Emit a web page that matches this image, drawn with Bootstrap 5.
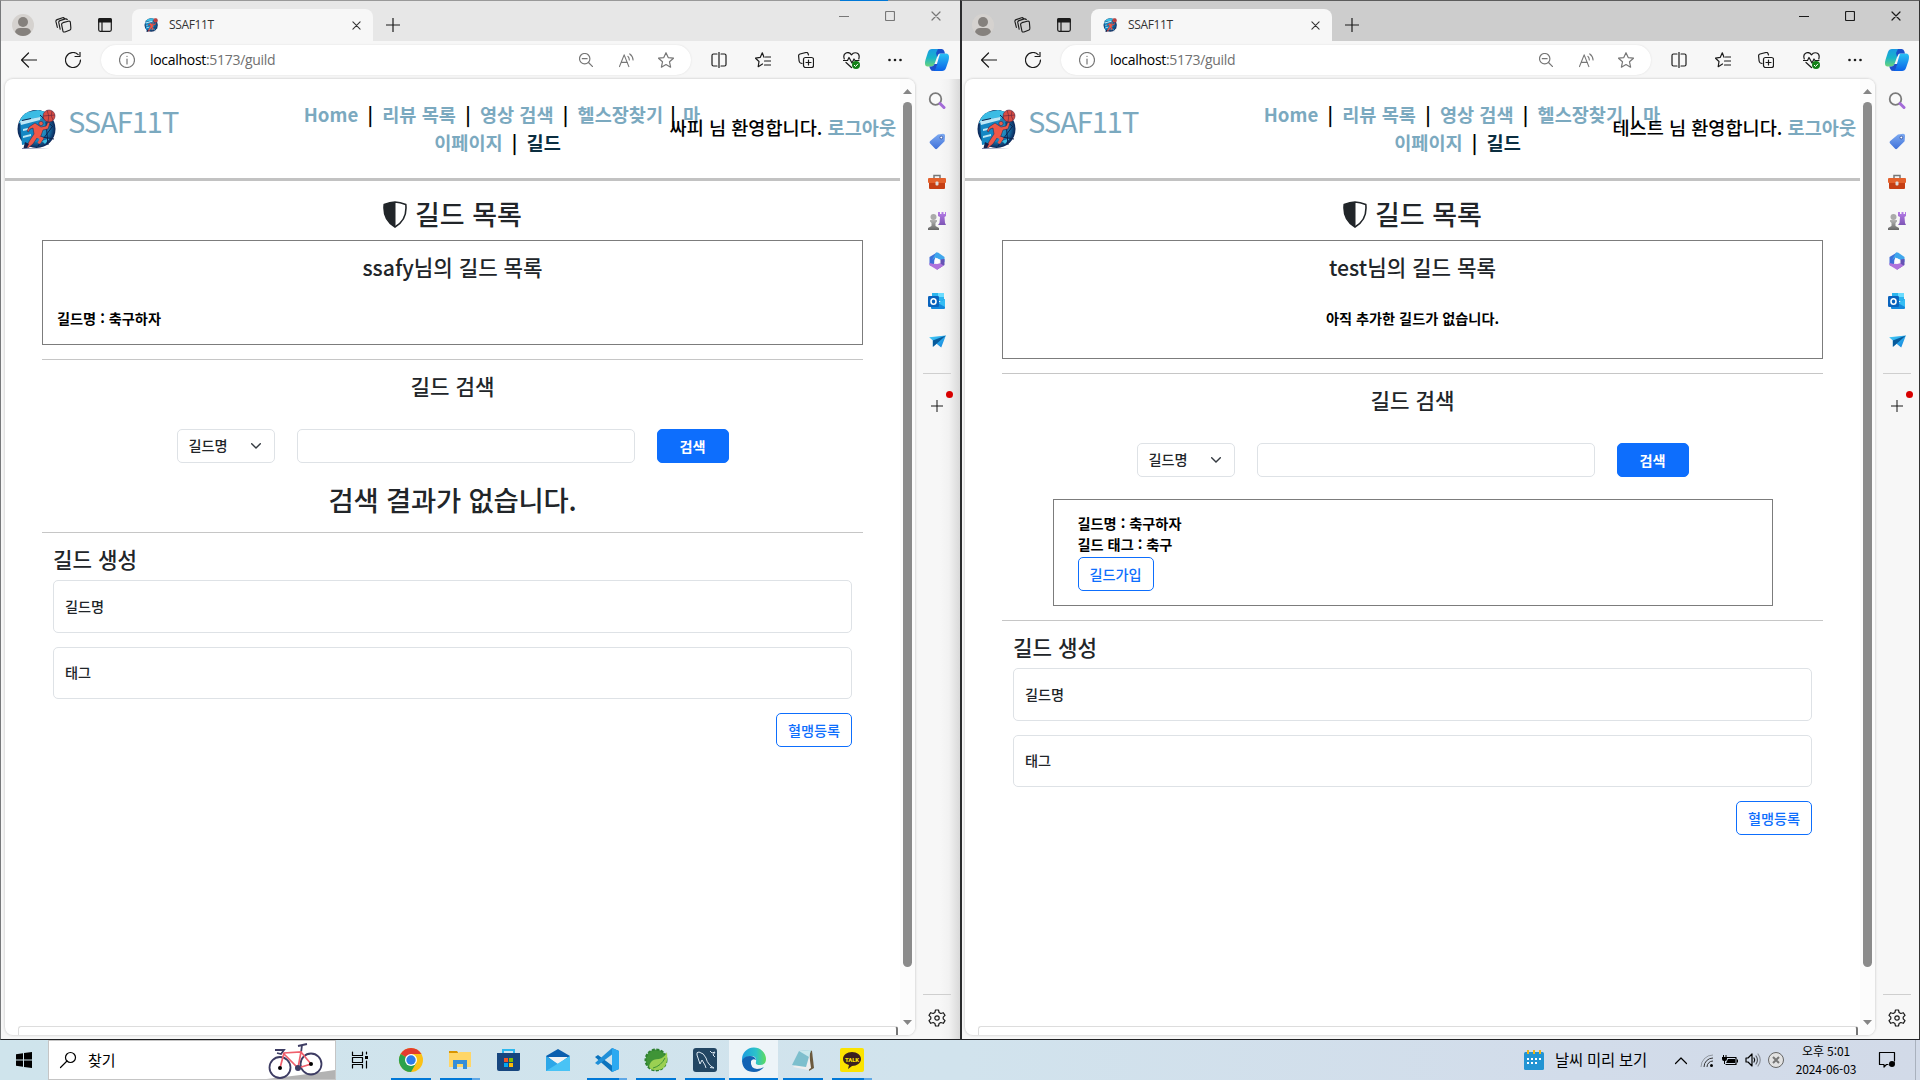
<!DOCTYPE html>
<html lang="ko">
<head>
<meta charset="utf-8">
<title>SSAF11T</title>
<link href="https://cdn.jsdelivr.net/npm/bootstrap@5.3.0/dist/css/bootstrap.min.css" rel="stylesheet">
<style>
body{width:1920px;height:1080px;overflow:hidden;font-family:"Noto Sans CJK KR","Noto Sans",sans-serif;background:#202124}
svg{display:block;flex:none;overflow:visible}
.ln{fill:none;stroke:currentColor;stroke-width:1.2;stroke-linecap:round;stroke-linejoin:round}
.desk{height:1040px}
.win{width:960px;height:1040px;border:1px solid #999;border-left-color:#77797b;border-bottom-color:#202124;border-right:0;background:#f7f7f7;color:#1b1b1b}
.win-b{border-top-color:#5c5c5c;border-left:2px solid #2a2b2d;border-right:1px solid #333}
.strip{height:40px;background:#e7e7e7}
.win-b .strip{background:#cdcdcd}
.strip>.c44{margin-right:1px}
.win-b .strip>.c44{width:42px}
.cell{display:flex;align-items:center;justify-content:center;flex:none}
.strip .cell{height:32px;margin-top:8px}
.c34{width:34px}.c50{width:50px}.c48{width:48px}.c44{width:44px}.c46{width:46px}.c40{width:40px}
.strip .wctl{width:46px;height:30px;margin:0}
.win-a .strip{padding-right:1px}
.win-a .wctl{color:#777}
.tabx{width:241px;height:32px;margin:8px 0 0 2px;background:#f7f7f7;border-radius:8px 8px 0 0;padding:0 12px 0 12px;font:12px/32px "Open Sans","Noto Sans",sans-serif;color:#333}
.tabx .ttl{margin-left:11px;letter-spacing:-.35px}
.tools{height:38px;padding-left:6px}
.win-b .tools{padding-left:5px}
.pill{width:590px;height:30px;margin-left:6px;border-radius:15px;background:#fff;box-shadow:0 0 2px #ddd;padding-left:18px;padding-right:5px;color:#777}
.url{font:14px/30px "Open Sans","Noto Sans",sans-serif;color:#707070;margin-left:15px;letter-spacing:-.3px}
.url b{font-weight:400;color:#000}
.mainrow{height:960px;padding-left:4px}
.win-b .mainrow{padding-left:3px}
.view{width:910px;height:956px;background:#fff;border-radius:8px;box-shadow:0 0 2px 1px #dcdcdc;overflow:hidden}
.doc{width:895px;height:956px}
.scrollcol{width:15px;background:#fcfcfc;padding:10px 0}
.thumb{width:9px;height:865px;margin-top:8px;border-radius:5px;background:#8b8b8b}
.side{width:45px;background:linear-gradient(90deg,#f7f7f7 55%,#f2f2f2 75%,#d9d9d9);padding-top:2px}
.win-b .side{background:#f7f7f7;width:44px}
.side .cell{width:44px;height:40px}
.rule28{width:28px;height:1px;background:#cfcfcf;margin-left:8px}
.dot{position:absolute;right:6px;top:13px;width:7px;height:7px;border-radius:50%;background:#d80000}
.side .sdiv{margin-top:12px}
.side .addc{margin-top:4px;padding-top:15px}
.side .gearc{padding-top:5px;margin-bottom:4px}
.site{height:102px;border-bottom:3px solid #c2c2c2;position:relative;padding-left:8px}
.brand{font-size:29px;line-height:40px;color:#7ba9bf;margin:21px 0 0 9px;letter-spacing:-1px}
.menu{position:absolute;left:297px;top:21px;width:400px;font-size:18.6px;line-height:28px;font-weight:700;color:#7ba9bf;text-align:center;white-space:pre}
.menu .second{padding-right:9px}
.menu i{font-style:normal;color:#000;display:inline-block;width:24px;text-align:center}
.menu i.n{width:20px}
.menu .on{color:#0b2e40}
.hello{position:absolute;right:4px;top:34px;font-size:18.6px;line-height:28px;font-weight:500;color:#000;white-space:nowrap}
.hello b{color:#7ba9bf}
.guild{padding:0 37px;color:#212529}
.guild h2{font-size:27px;font-weight:500;line-height:50px;margin:0 0 1px}
.guild h2.nores{font-size:27.4px;height:69px;padding-top:11px;margin:0;letter-spacing:-.2px}
.guild h4{font-size:21.2px;font-weight:500;line-height:52px;padding-bottom:1px;margin:0}
.frame h4{line-height:50px;padding:0}
.guild .frame h4{padding-top:1px;height:51px}
.frame{border:1px solid #7c7c7c}
.small14{font-size:14.2px;font-weight:700;line-height:21px;color:#000}
.owned{padding:16px 14px 0}
.line1{height:1px;background:#c6c6c6;margin:14px 0 0}
.line1.snug{margin:0}
.find{height:34px;margin-top:16px}
.sel{width:98px;border:1px solid #dee2e6;border-radius:5px;padding:0 13px 0 11px;font-size:14.2px;font-weight:500}
.inp{width:338px;border:1px solid #dee2e6;border-radius:5px;margin:0 22px}
.guild .btn{font-size:14.2px;font-weight:500;line-height:20px;height:34px;padding:0;border-radius:5px;--bs-btn-border-radius:5px}
.w72{width:72px}.w76{width:76px}
.guild .w72{font-weight:700}
.fld{height:52.5px;border:1px solid #dee2e6;border-radius:5px;margin-bottom:14px;padding-left:11px;font-size:14.2px;font-weight:500}
.make{padding:0 11px}
.guild .make h4{line-height:47px;padding:2px 0 0;height:47px}
.result{width:720px;height:107px;margin:22px auto 0;padding:13px 24px}
.result .btn{margin-top:2px}
.foot{position:absolute;left:13px;width:880px;top:947px;height:12px;border:1px solid #ddd;border-right:2px solid #777;border-radius:3px 3px 0 0}
.taskbar{height:40px;background:linear-gradient(90deg,#cfe4ec,#d1e3ed 50%,#d2dcea 82%,#d2dae8);color:#000}
.srch{width:288px;height:40px;background:#fff;border:1px solid #c5c5c5;padding-left:11px;font-size:15px;overflow:hidden}
.app{width:49px;height:40px;position:relative}
.app.run::after{content:"";position:absolute;left:4.5px;bottom:0;width:40px;height:2px;background:#0078d7}
.app.multi::after{background:linear-gradient(90deg,#0078d7 80%,#5fa8e6 80%)}
.app.act{background:#edf4f8}
.app.act::after{left:0;width:49px}
.startc{width:48px}.viewc{width:50px;padding-right:2px}
.tray{width:23px}
.weather{font-size:15.4px;margin:0 15px 0 11px;letter-spacing:-.2px;white-space:nowrap}
.chevc{width:33px;padding-left:5px}
.clock{font-size:12px;line-height:18px;width:79px;padding:0 1px 1px 0;text-align:center;letter-spacing:-.1px}
.bell{width:50px;height:40px;padding-right:6px;border-right:1px solid #a9b1bd;margin-right:4px}
.flash{position:absolute;left:840px;top:0;width:48px;height:1px;background:#0078d7}
</style>
<script src="https://cdn.jsdelivr.net/npm/bootstrap@5.3.0/dist/js/bootstrap.bundle.min.js"></script>
</head>
<body>
<svg width="0" height="0" class="position-absolute">
<defs>
<linearGradient id="gPur" x1="0" y1="0" x2="0" y2="1"><stop stop-color="#b77be8"/><stop offset="1" stop-color="#7d56b5"/></linearGradient>
<linearGradient id="gGray" x1="0" y1="0" x2="0" y2="1"><stop stop-color="#b5b5b5"/><stop offset="1" stop-color="#666"/></linearGradient>
<linearGradient id="gTag" x1="0" y1="0" x2="0" y2="1"><stop stop-color="#7eabf2"/><stop offset="1" stop-color="#3f70d8"/></linearGradient>
<linearGradient id="gCop1" x1="0" y1="0" x2="0" y2="1"><stop stop-color="#1a9be4"/><stop offset=".5" stop-color="#18b4c9"/><stop offset="1" stop-color="#6bd47a"/></linearGradient>
<linearGradient id="gCop2" x1="0" y1="0" x2="0" y2="1"><stop stop-color="#29c3f5"/><stop offset="1" stop-color="#0b62e8"/></linearGradient>
<linearGradient id="gEdge" x1="0" y1="0" x2="1" y2="0"><stop stop-color="#1b9de2"/><stop offset=".6" stop-color="#2cc3c9"/><stop offset="1" stop-color="#5fdc5a"/></linearGradient>
<linearGradient id="gBlue" x1="0" y1="0" x2="1" y2="1"><stop stop-color="#45cdf7"/><stop offset="1" stop-color="#1282dc"/></linearGradient>
<radialGradient id="gLogo"><stop stop-color="#38b5e0"/><stop offset=".65" stop-color="#1678b0"/><stop offset="1" stop-color="#0c2455"/></radialGradient>
<symbol id="logo" viewBox="0 0 40 40"><circle cx="20.500" cy="20" r="19" fill="url(#gLogo)"/><path d="M3 14Q5 6 12 3L22 1 30 3 25 10 6 15zM26 32l8-3-5 6z" fill="#3bbce4"/><path d="M4 12l20-4-1 24-17 4z" fill="#1487c3"/><path d="M4 12l20-4v3L5 16zM7 20l5-1v2l-5 1zm0 7l8-2v2l-8 2z" fill="#bde7f5"/><path d="M6 11l9-2v1l-9 2z" fill="#102550"/><path d="M24 6l13 12M22 37l14-19M20 27l18 3M30 13l2 23" stroke="#0e2350" fill="none"/><circle cx="25" cy="14.500" r="2.200" fill="#e85b4b" stroke="#132551" stroke-width=".5"/><path d="M13 18l6-4 6 4 5-1 2-4 2 1-2 6-5 1-2 6-4 2-4 6-5 4-2-1 4-7 4-6-1-6-3 1-1.500 3-1.500-1z" fill="#ed5848" stroke="#142650" stroke-width=".5"/><path d="M21 26l7 3-4 6-2.500-1 2-4-4-2z" fill="#ed5848"/><path d="M9 33l4 2-2 4-4 2z" fill="#17234d"/><circle cx="33" cy="7" r="6" fill="#d84c42" stroke="#5d2440" stroke-width=".6"/><path d="M27 7l12-1M31 1q3 6 1 12M36 2q-2 5 1 9" fill="none" stroke="#5d2440" stroke-width=".6"/><path d="M6 39.500l28 1" stroke="#7782a5"/></symbol>
<symbol id="user" viewBox="0 0 22 22"><circle cx="11" cy="11" r="11" fill="#d5d2cf"/><circle cx="11" cy="8" r="5" fill="#85817d"/><path d="M3 18q1-4 5-4h6q4 0 5 4-3 4-8 4t-8-4z" fill="#85817d"/></symbol>
<symbol id="stack" viewBox="0 0 18 18"><path class="ln" d="M8.500 6l5.500-1.500q2-.5 2.300 1.300l.5 6q.2 1.700-1.500 2.200l-4.800 1.800q-2 .6-2.200-1.300L7 8q-.1-1.500 1.500-2zM5.500 13L4 6q-.3-1.700 1.200-2.200L11 2q1.300-.3 2 .8M2.500 11L1 5q-.3-1.700 1.200-2.200L8 .8q1.400-.3 2 .7"/></symbol>
<symbol id="tabact" viewBox="0 0 14 14"><rect class="ln" x=".7" y=".7" width="12.600" height="12.600" rx="1.500"/><path d="M0 2q0-2 2-2h10q2 0 2 2v2.500H0z" fill="currentColor"/><path class="ln" d="M4 4v9"/></symbol>
<symbol id="x" viewBox="0 0 10 10"><path class="ln" d="M1 1l8 8M9 1L1 9"/></symbol>
<symbol id="plus" viewBox="0 0 14 14"><path class="ln" d="M7 0v14M0 7h14"/></symbol>
<symbol id="minw" viewBox="0 0 10 10"><path class="ln" d="M0 5.500h10"/></symbol>
<symbol id="maxw" viewBox="0 0 10 10"><rect class="ln" x=".5" y=".5" width="9" height="9" rx="1"/></symbol>
<symbol id="back" viewBox="0 0 16 16"><path class="ln" d="M16 8H.7M7.500 1L.5 8l7 7"/></symbol>
<symbol id="reload" viewBox="0 0 16 16"><path class="ln" d="M15.500 8a7.500 7.500 0 1 1-2.300-5.400M15 0v4.500h-5"/></symbol>
<symbol id="info" viewBox="0 0 16 16"><circle class="ln" cx="8" cy="8" r="7.500"/><path class="ln" d="M8 7v5M8 4.300v.2"/></symbol>
<symbol id="zout" viewBox="0 0 14 14"><circle class="ln" cx="5.700" cy="5.700" r="5.200"/><path class="ln" d="M9.500 9.500L14 14M3.300 5.700h4.800"/></symbol>
<symbol id="read" viewBox="0 0 16 16"><path class="ln" d="M.5 14.500L5.500 2l5 12.500M2.500 10h6.500M9.500 3.500q1.500 1.500 1.500 4M11.500 1q3.500 2.500 3.500 6.500"/></symbol>
<symbol id="star" viewBox="0 0 16 16"><path class="ln" d="M8 .7l2.200 4.900 5.300.6-4 3.600 1.100 5.400L8 12.500l-4.600 2.700 1.100-5.400-4-3.600 5.300-.6z"/></symbol>
<symbol id="split" viewBox="0 0 16 16"><path class="ln" d="M6 2H2.500Q1 2 1 3.500v9Q1 14 2.500 14H6M10 2h3.500Q15 2 15 3.500v9q0 1.500-1.500 1.500H10M8 0v16"/></symbol>
<symbol id="favs" viewBox="0 0 16 16"><path class="ln" d="M9 5.200L7.300.8 5.200 5.400.5 6.200 4 9.500l-.8 5.200L7.500 12M10.500 5H16M9.500 9H16M9.500 13H16"/></symbol>
<symbol id="coll" viewBox="0 0 16 16"><rect class="ln" x="5.500" y="5.500" width="10" height="10" rx="2"/><path class="ln" d="M10.500 8v5M8 10.500h5M4 11.500L2.500 11Q1.300 10.500 1.100 9L.6 4Q.5 2.500 2 2l6-1.500q1.500-.3 2 1l.5 1.500"/></symbol>
<symbol id="heart" viewBox="0 0 17 17"><path class="ln" d="M1.300 7Q-.3 2.500 3 1t5.500 1.800Q10.500 0 13.800 1t2 6M.5 8.500h4l1.500-3 3 5.500 2-4 1 1.500h4M3 10.500l5.500 5"/><circle cx="13" cy="13" r="4" fill="#138018"/><path d="M11 13l1.500 1.500L15 11.800" fill="none" stroke="#fff"/></symbol>
<symbol id="more" viewBox="0 0 14 4"><g fill="currentColor"><circle cx="1.500" cy="2" r="1.300"/><circle cx="7" cy="2" r="1.300"/><circle cx="12.500" cy="2" r="1.300"/></g></symbol>
<symbol id="copilot" viewBox="0 0 24 22"><path d="M9 0h8l-3.500 4L9.500 15Q8.500 17.500 6 17.500H2.500Q0 17.500 0 14.500q0-2 .6-4L3 3Q4 0 7 0z" fill="url(#gCop1)"/><path d="M15 4.500h6q3 0 3 3.500 0 2-.6 4L21 19q-1 3-4 3H8l3-4z" fill="url(#gCop2)"/><path d="M6 17.500q2.500 0 3.500-2.500l3 0L11 19q-1 3-3 3-2 0-3-2.500l-.7-2zM13 0h3.500q2 0 2.700 2l.8 2.500h-5q-1.500 0-2 1.500l-1 2-1-4z" fill="#1b50ca"/></symbol>
<symbol id="ssearch" viewBox="0 0 18 18"><circle cx="7.500" cy="7" r="5.800" fill="#fafafa" stroke="#7b7b7b" stroke-width="1.800"/><path d="M12 11.500l4 4" stroke="#a36bd8" stroke-width="3" stroke-linecap="round"/></symbol>
<symbol id="tag" viewBox="0 0 18 18"><path d="M9.500 1.500L15 .8q2 0 2 2l-.5 6-8 8q-1 1-2 0l-5.500-6q-.8-1 0-2z" fill="url(#gTag)"/><circle cx="13" cy="4.800" r="1.500" fill="#fff" stroke="#3657a8"/></symbol>
<symbol id="tbox" viewBox="0 0 18 16"><path d="M6 5V2.500h6V5" fill="none" stroke="#777" stroke-width="1.500"/><rect y="5" width="18" height="5" rx="1" fill="#e3612c"/><path d="M1 10h16v5q0 1-1 1H2q-1 0-1-1z" fill="#c63f14"/><rect x="7.500" y="8.500" width="3" height="4" rx="1" fill="#ddd"/></symbol>
<symbol id="chess" viewBox="0 0 18 18"><path d="M10 0h2v2h1.500V0h2v2H17V0h1v4l-1.500 1 .5 6 1 2h-8l1.500-2 .5-6-2-1z" fill="url(#gPur)"/><circle cx="5.500" cy="5" r="3" fill="#aaa"/><path d="M2 8h7v1.500L7.500 11v3l3.500 2v2H0v-2l3.500-2v-3L2 9.500z" fill="url(#gGray)"/></symbol>
<symbol id="m365" viewBox="0 0 18 18"><path d="M9 .5L7 6 6 12l-3 2-1.500-1.500V5z" fill="#3f6fd9"/><path d="M8 .5h2l6.500 4.500v5L12 7.500 7 5.500 4 8z" fill="#3fa6ec"/><path d="M16.500 7v6L9 17.700 7.500 13l5-1.500V7.500z" fill="#6553b4"/><path d="M1.500 11l4.500 1 6.500-.5 3 2L9 17.700l-7.500-4.500z" fill="#b173dc"/><path d="M9 6.200l2.500 1.500v2.800L9 12l-2.500-1.500V7.700z" fill="#fff"/></symbol>
<symbol id="outlook" viewBox="0 0 18 18"><path d="M4 1h12v8H4z" fill="#2cb5ee"/><path d="M10 1h6v4h-6z" fill="#6bdcff"/><path d="M3 8l7 3 7-4v9q0 1-1 1H4q-1 0-1-1z" fill="#1488db"/><path d="M10 11l7-4v8z" fill="#35bdf4"/><rect y="4" width="11" height="11" rx="1.200" fill="#0a63bd"/><ellipse cx="5.500" cy="9.500" rx="2.500" ry="2.800" fill="none" stroke="#fff" stroke-width="1.600"/></symbol>
<symbol id="send" viewBox="0 0 18 14"><path d="M0 2.500L18 .5l-5 13-5-4-4 3V6z" fill="url(#gBlue)"/><path d="M4 6l14-5.500L8 9.500l-4 3.500z" fill="#075a9b"/></symbol>
<symbol id="gear" viewBox="0 0 18 18"><path class="ln" d="M7.500 1h3l.6 2.500 1.700 1 2.500-.8 1.700 2.700L15.200 8.200v1.600l1.800 1.900-1.700 2.600-2.500-.8-1.700 1-.6 2.500h-3l-.6-2.500-1.700-1-2.500.8L1 11.700l1.800-1.900V8.200L1 6.300l1.700-2.600 2.500.8 1.700-1z"/><circle class="ln" cx="9" cy="9" r="2.200"/></symbol>
<symbol id="up" viewBox="0 0 9 5"><path d="M4.500 0L9 5H0z" fill="#858585"/></symbol>
<symbol id="halfshield" viewBox="0 0 24 27"><path d="M12 1Q17 1.200 22.800 3.500 24.500 19 12 26-.5 19 1.200 3.500 7 1.200 12 1z" fill="#fff" stroke="#212529" stroke-width="1.600"/><path d="M12.500 1Q7 1.200 1.200 3.500-.5 19 12.500 26z" fill="#212529"/></symbol>
<symbol id="chev" viewBox="0 0 10 6"><path d="M.7.7L5 5 9.300.7" fill="none" stroke="#343a40" stroke-width="1.400" stroke-linecap="round"/></symbol>
</defs>
</svg>

<!-- Browser parts shared by both windows -->
<template id="t-top">
  <div class="strip d-flex">
   <div class="cell c44"><svg width="22" height="22"><use href="#user"/></svg></div>
   <div class="cell c34"><svg width="17" height="17"><use href="#stack"/></svg></div>
   <div class="cell c50"><svg width="14" height="14"><use href="#tabact"/></svg></div>
   <div class="tabx d-flex align-items-center"><svg width="14" height="14"><use href="#logo"/></svg><span class="ttl">SSAF11T</span><svg class="ms-auto" width="9" height="9"><use href="#x"/></svg></div>
   <div class="cell c40"><svg width="14" height="14"><use href="#plus"/></svg></div>
   <div class="cell wctl ms-auto"><svg width="10" height="10"><use href="#minw"/></svg></div>
   <div class="cell wctl"><svg width="10" height="10"><use href="#maxw"/></svg></div>
   <div class="cell wctl"><svg width="10" height="10"><use href="#x"/></svg></div>
  </div>
  <div class="tools d-flex align-items-center">
   <div class="cell c44"><svg width="16" height="16"><use href="#back"/></svg></div>
   <div class="cell c44"><svg width="16" height="16"><use href="#reload"/></svg></div>
   <div class="pill d-flex align-items-center flex-shrink-0"><svg width="16" height="16"><use href="#info"/></svg><span class="url me-auto"><b>localhost</b>:5173/guild</span>
    <div class="cell c40"><svg width="14" height="14"><use href="#zout"/></svg></div><div class="cell c40"><svg width="15" height="15"><use href="#read"/></svg></div><div class="cell c40"><svg width="16" height="16"><use href="#star"/></svg></div></div>
   <div class="cell c48 ms-1"><svg width="16" height="16"><use href="#split"/></svg></div>
   <div class="cell c40"><svg width="16" height="16"><use href="#favs"/></svg></div>
   <div class="cell c46"><svg width="16" height="16"><use href="#coll"/></svg></div>
   <div class="cell c44"><svg width="17" height="17"><use href="#heart"/></svg></div>
   <div class="cell c44"><svg width="14" height="4"><use href="#more"/></svg></div>
   <div class="cell c40"><svg width="24" height="22"><use href="#copilot"/></svg></div>
  </div>
</template>
<template id="t-scroll">
    <div class="scrollcol d-flex flex-column align-items-center"><svg width="9" height="5"><use href="#up"/></svg><div class="thumb"></div><svg class="mt-auto" width="9" height="5" transform="rotate(180)"><use href="#up"/></svg></div>
    <div class="foot"></div>
</template>
<template id="t-side">
   <aside class="side d-flex flex-column">
    <div class="cell"><svg width="18" height="18"><use href="#ssearch"/></svg></div>
    <div class="cell"><svg width="17" height="17"><use href="#tag"/></svg></div>
    <div class="cell"><svg width="18" height="16"><use href="#tbox"/></svg></div>
    <div class="cell"><svg width="18" height="18"><use href="#chess"/></svg></div>
    <div class="cell"><svg width="18" height="18"><use href="#m365"/></svg></div>
    <div class="cell"><svg width="18" height="18"><use href="#outlook"/></svg></div>
    <div class="cell"><svg width="17" height="13"><use href="#send"/></svg></div>
    <div class="rule28 sdiv"></div>
    <div class="cell position-relative addc"><svg width="12" height="12"><use href="#plus"/></svg><span class="dot"></span></div>
    <div class="rule28 mt-auto"></div>
    <div class="cell gearc"><svg width="18" height="18"><use href="#gear"/></svg></div>
   </aside>
</template>
<template id="t-nav"><nav class="menu"><div>Home<i>|</i>리뷰 목록<i>|</i>영상 검색<i>|</i>헬스장찾기<i class="n">|</i>마</div><div class="second">이페이지<i>|</i><span class="on">길드</span></div></nav></template>
<template id="t-make"><div class="make"><h4>길드 생성</h4><div class="fld d-flex align-items-center">길드명</div><div class="fld d-flex align-items-center">태그</div><div class="text-end"><button class="btn btn-outline-primary w76">혈맹등록</button></div></div></template>
<template id="t-find"><h4 class="text-center">길드 검색</h4>
      <div class="find d-flex justify-content-center"><div class="sel d-flex align-items-center justify-content-between">길드명<svg width="10" height="6"><use href="#chev"/></svg></div><div class="inp"></div><button class="btn btn-primary w72">검색</button></div></template>

<div class="desk d-flex">
 <div class="win win-a">
  <slot data-part="t-top"></slot>
  <div class="mainrow d-flex">
   <div class="view d-flex position-relative flex-shrink-0">
    <div class="doc">
     <header class="site d-flex"><svg class="mt-4 pt-1" width="46" height="46"><use href="#logo" x="3" y="2" width="40" height="40"/></svg><div class="brand">SSAF11T</div>
      <slot data-part="t-nav"></slot>
      <div class="hello">싸피 님 환영합니다. <b>로그아웃</b></div></header>
     <main class="guild">
      <h2 class="d-flex justify-content-center align-items-center pt-2 pb-0"><svg class="me-2" width="24" height="27"><use href="#halfshield"/></svg>길드 목록</h2>
      <div class="frame" style="height:105px"><h4 class="text-center">ssafy님의 길드 목록</h4><div class="small14 owned">길드명 : 축구하자</div></div>
      <div class="line1"></div>
      <slot data-part="t-find"></slot>
      <h2 class="text-center nores">검색 결과가 없습니다.</h2>
      <div class="line1 snug"></div>
      <slot data-part="t-make"></slot>
     </main>
    </div>
    <slot data-part="t-scroll"></slot>
   </div>
   <slot data-part="t-side"></slot>
  </div>
 </div>

 <div class="win win-b">
  <slot data-part="t-top"></slot>
  <div class="mainrow d-flex">
   <div class="view d-flex position-relative flex-shrink-0">
    <div class="doc">
     <header class="site d-flex"><svg class="mt-4 pt-1" width="46" height="46"><use href="#logo" x="3" y="2" width="40" height="40"/></svg><div class="brand">SSAF11T</div>
      <slot data-part="t-nav"></slot>
      <div class="hello">테스트 님 환영합니다. <b>로그아웃</b></div></header>
     <main class="guild">
      <h2 class="d-flex justify-content-center align-items-center pt-2 pb-0"><svg class="me-2" width="24" height="27"><use href="#halfshield"/></svg>길드 목록</h2>
      <div class="frame" style="height:119px"><h4 class="text-center">test님의 길드 목록</h4><div class="small14 owned text-center">아직 추가한 길드가 없습니다.</div></div>
      <div class="line1"></div>
      <slot data-part="t-find"></slot>
      <div class="frame result small14"><div>길드명 : 축구하자</div><div>길드 태그 : 축구</div><button class="btn btn-outline-primary w76">길드가입</button></div>
      <div class="line1"></div>
      <slot data-part="t-make"></slot>
     </main>
    </div>
    <slot data-part="t-scroll"></slot>
   </div>
   <slot data-part="t-side"></slot>
  </div>
 </div>
 <div class="flash"></div>
</div>

<footer class="taskbar d-flex align-items-center">
 <div class="cell startc"><svg width="16" height="16"><path d="M0 2.200L7 1.200V7.500H0zM8 1L16 0v7.500H8zM0 8.500h7v6.300l-7-1zM8 8.500h8V16l-8-1z"/></svg></div>
 <div class="srch d-flex align-items-center flex-shrink-0"><svg width="16" height="16"><circle cx="10.500" cy="5.500" r="5" class="ln"/><path class="ln" d="M7 9L.5 15.500"/></svg><span class="ms-2 ps-1">찾기</span>
  <svg class="ms-auto" width="78" height="38"><path d="M0 39Q40 35 78 29v10z" fill="#999" opacity=".75"/><g fill="none" stroke="#3d3c63" stroke-width="1.800"><circle cx="23" cy="26.500" r="10.500"/><circle cx="54" cy="23" r="10.500"/><path d="M18 9h9l-3 4-4-1M41 5l9-2M45 4l-1 8"/></g><path d="M23 27l4-15 17-1-3 16-14-14M44 11l10 12-13 4" fill="none" stroke="#f0606d" stroke-width="1.700"/><circle cx="23" cy="27" r="2"/><circle cx="54" cy="23" r="2"/><circle cx="41" cy="27" r="3" fill="#3d3c63"/></svg></div>
 <div class="cell viewc"><svg width="16" height="16"><path class="ln" d="M.5 0v3.500h10V0M.5 16v-3.500h10V16M.5 5.500h10v5H.5zM14.500 0v2M14.500 9v7"/><path d="M13 4h3v3h-3z"/></svg></div>
 <div class="cell app run"><svg width="24" height="24"><circle cx="12" cy="12" r="12" fill="#fbc116"/><path d="M12 12L1.600 6A12 12 0 0 1 22.400 6H12z" fill="#e33b2e"/><path d="M1.600 6A12 12 0 0 0 12 24l5.200-9L12 12z" fill="#2ba24c"/><circle cx="12" cy="12" r="6" fill="#fff"/><circle cx="12" cy="12" r="4.700" fill="#2f7de9"/></svg></div>
 <div class="cell app run multi"><svg width="22" height="20"><path d="M0 1h8l2 3H0z" fill="#d99500"/><path d="M0 3h9l2-1h11v15H0z" fill="#ffd667"/><path d="M4 10h14v9h-4v-5H8v5H4z" fill="#358ed8"/></svg></div>
 <div class="cell app"><svg width="23" height="24"><path d="M6 6V2h11v4" fill="none" stroke="#2cb8ef" stroke-width="2"/><path d="M0 5h23v16q0 2-2 2H2q-2 0-2-2z" fill="#17467f"/><path d="M7 10h4v4H7z" fill="#f35325"/><path d="M12 10h4v4h-4z" fill="#81bc06"/><path d="M7 15h4v4H7z" fill="#05a6f0"/><path d="M12 15h4v4h-4z" fill="#ffba08"/></svg></div>
 <div class="cell app"><svg width="24" height="22"><path d="M0 7l12-7 12 7v8H0z" fill="#0c5fae"/><path d="M2 8h20l-10 8z" fill="#f3f3f3"/><path d="M0 7l12 8L24 7v15H0z" fill="#2da7e8"/><path d="M0 22L24 7v15z" fill="#49c3f5"/></svg></div>
 <div class="cell app run multi"><svg width="24" height="24"><path d="M17 0l7 3v18l-7 3L0 9l3-2 14 10.500z" fill="#0b73bd"/><path d="M0 15l3 2L17 6.500V0z" fill="#1f8fd8"/><path d="M17 0l7 3v18l-7 3z" fill="#2ba9f1"/></svg></div>
 <div class="cell app run"><svg width="24" height="24"><circle cx="12" cy="12" r="10.500" fill="#3f9437" stroke="#2f8030" stroke-width="2" stroke-dasharray="3 1.500"/><path d="M23 4q2 19-12 18-9-1-4-8Q9 11 15 11q5-1 8-7z" fill="#9bd052"/><path d="M9 20q8-2 12-10" stroke="#3f9437" fill="none"/></svg></div>
 <div class="cell app run"><svg width="24" height="24"><rect width="24" height="24" rx="3" fill="#224663"/><path d="M7 16L4 7q-1-3 2-3 5 1 7 6 1 4 3 6 1 2 5 4l-4-.5M7 16l2-4 3 5 1 3M17 3l2 2 3-1-2 3 2 2" fill="none" stroke="#d8e5ef" stroke-width="1"/></svg></div>
 <div class="cell app run act"><svg width="24" height="24"><path d="M0 12a12 12 0 0 1 24-1q0 6-6 6-5 0-4-3 1-6-5-6Q2 8 0 14z" fill="url(#gEdge)"/><path d="M0 13q2-5 8-5 5 0 6 4-3-2-5 1-1 7 6 8 4 0 7-2-4 5-10 5Q1 24 0 13z" fill="#1363b4"/></svg></div>
 <div class="cell app run"><svg width="24" height="24"><path d="M19 2l2 1 2 17-5 3z" fill="#6b5a3e"/><path d="M18 5l2 15-3 2-15-3z" fill="#eee"/><path d="M8 3l12-1-5 17-14-2z" fill="#7dbfcd"/><path d="M8 3l12-1-2 7z" fill="#c8e8ed"/></svg></div>
 <div class="cell app run multi"><svg width="24" height="24"><rect width="24" height="24" rx="2" fill="#fbe300"/><path d="M12 4c5 0 9 3 9 7s-4 7-9 7l-4 3 1-4c-4-1-6-3-6-6 0-4 4-7 9-7z" fill="#3a2020"/><text x="12" y="13.500" text-anchor="middle" font-family="Roboto" font-size="5.800" font-weight="900" fill="#fbe300">TALK</text></svg></div>
 <div class="cell ms-auto"><svg width="20" height="20"><rect y="2" width="20" height="18" rx="1.500" fill="#2294d3"/><path d="M4 0v4M10 0v4M16 0v4" stroke="#f0b51a" stroke-width="2"/><path d="M3 9h14M3 13h11" stroke="#fff" stroke-width="2" stroke-dasharray="2 2"/></svg></div>
 <span class="weather">날씨 미리 보기</span>
 <div class="cell chevc"><svg width="12" height="7"><path class="ln" d="M.5 6.500L6 1l5.500 5.500"/></svg></div>
 <div class="cell tray"><svg width="13" height="13"><g fill="none" stroke="#333"><path d="M1 13A12 12 0 0 1 13 1" opacity=".4"/><path d="M4 13a9 9 0 0 1 9-9M7 13a6 6 0 0 1 6-6"/></g><circle cx="11.500" cy="11.500" r="1.500"/></svg></div>
 <div class="cell tray"><svg width="16" height="11"><path class="ln" d="M5 2.500h9v7H4"/><path d="M6 4h7v4H4zM15 4.500h1v3h-1zM0 2h5v2q0 2-2 2v3H2V6Q0 6 0 4zM1 0h1v2H1zM3.500 0h1v2h-1z"/></svg></div>
 <div class="cell tray"><svg width="16" height="14"><path class="ln" d="M1 5h2l4-4v12L3 9H1zM9 5q1.500 2 0 4"/><path class="ln" opacity=".6" d="M11 3q3 4 0 8"/><path class="ln" opacity=".35" d="M13 1q4.500 6 0 12"/></svg></div>
 <div class="cell tray"><svg width="16" height="16"><circle cx="8" cy="8" r="7.500" fill="#e2e2e2" stroke="#666"/><path d="M5 5l6 6M11 5l-6 6" stroke="#777" stroke-width="2"/></svg></div>
 <div class="clock">오후 5:01<br>2024-06-03</div>
 <div class="cell bell"><svg width="17" height="16"><path class="ln" d="M9 12.500H7.500L5 15v-2.500H.5V.5h15v8"/><path d="M16 8q0 6-7 6 5-1 7-6z"/><circle cx="13" cy="12" r="3"/></svg></div>
</footer>
<script>
document.querySelectorAll('slot[data-part]').forEach(function (s) {
  s.replaceWith(document.getElementById(s.dataset.part).content.cloneNode(true));
});
</script>
</body>
</html>
